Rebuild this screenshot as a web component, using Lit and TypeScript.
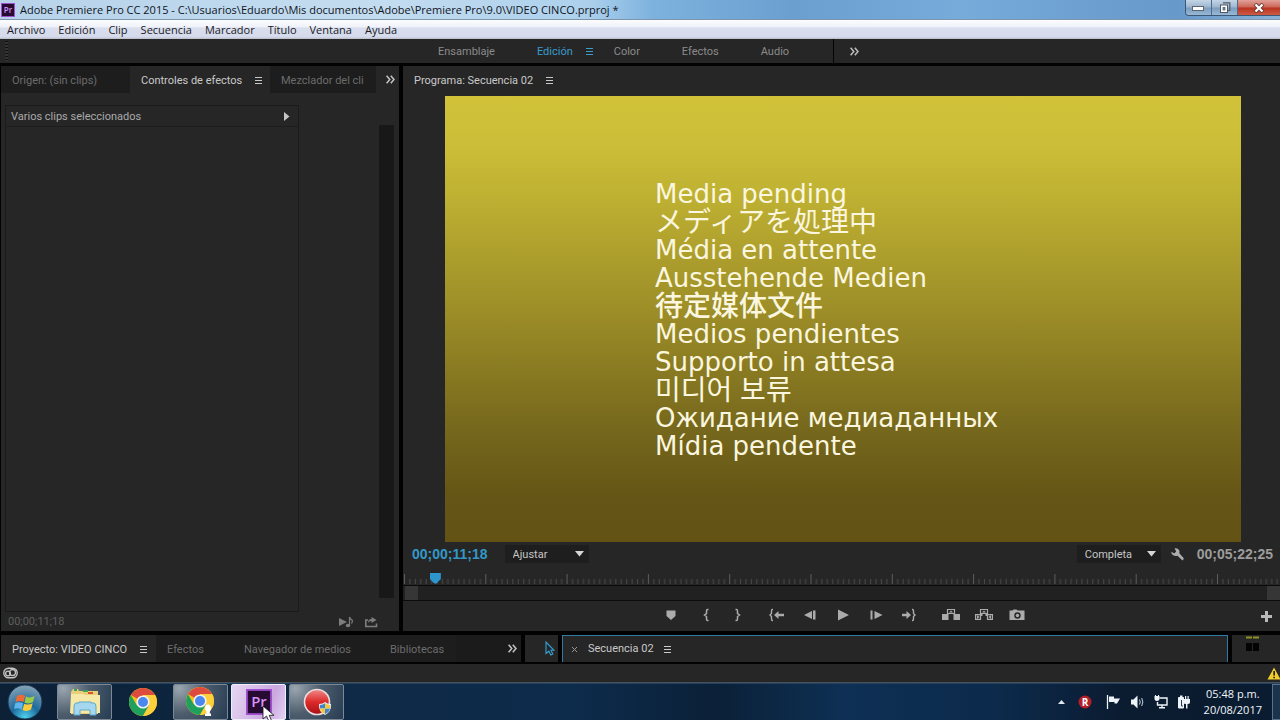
import { LitElement, html, svg, css } from "lit";
import { customElement } from "lit/decorators.js";

const chevrons = html`<svg width="9" height="9" viewBox="0 0 9 9"><path d="M0.6 0.8 3.8 4.5 0.6 8.2M4.8 0.8 8 4.5 4.8 8.2" fill="none" stroke="currentColor" stroke-width="1.5"/></svg>`;
const burger = html`<svg width="7" height="7" viewBox="0 0 7 7"><path d="M0 .5H7M0 3.5H7M0 6.5H7" stroke="currentColor"/></svg>`;
const down = html`<svg class="down" width="9" height="6" viewBox="0 0 9 6"><path d="M0 0H9L4.5 5.5Z" fill="#d6d6d6"/></svg>`;

const icons = {
  marker: svg`<path d="M4.500 3.500H13.500V9L9 13 4.500 9Z"/>`,
  markIn: svg`<path d="M10.500 2.500H9.500Q8.500 2.500 8.500 4V6.500L6.500 8 8.500 9.500V12Q8.500 13.500 9.500 13.500H10.500" fill="none" stroke="currentColor" stroke-width="1.500"/>`,
  markOut: svg`<path d="M7.500 2.500H8.500Q9.500 2.500 9.500 4V6.500L11.500 8 9.500 9.500V12Q9.500 13.500 8.500 13.500H7.500" fill="none" stroke="currentColor" stroke-width="1.500"/>`,
  goIn: svg`<path d="M5 2.500H4.500Q3.500 2.500 3.500 4V6.500L2 8 3.500 9.500V12Q3.500 13.500 4.500 13.500H5" fill="none" stroke="currentColor" stroke-width="1.400"/><path d="M6 8 10.500 4V6.700H16V9.300H10.500V12Z"/>`,
  goOut: svg`<path d="M12 2.500H12.500Q13.500 2.500 13.500 4V6.500L15 8 13.500 9.500V12Q13.500 13.500 12.500 13.500H12" fill="none" stroke="currentColor" stroke-width="1.400"/><path d="M11 8 6.500 4V6.700H2V9.300H6.500V12Z"/>`,
  back: svg`<path d="M3 8 11 4V12ZM12 3.500H14.500V12.500H12Z"/>`,
  play: svg`<path d="M4 2.500 15 8 4 13.500Z"/>`,
  forward: svg`<path d="M15.500 8 7.500 4V12ZM3.500 3.500H5.500V12.500H3.500Z"/>`,
  lift: svg`<path d="M0 7H6.500V13H0ZM11.500 7H18V13H11.500Z"/><path d="M5.500 8V2.500H12.500V8M6 6.500H12" fill="none" stroke="currentColor" stroke-width="1.200"/><path d="M9 3.500 11 5.500H7Z"/>`,
  extract: svg`<path d="M.6 7.600H5.500V12.400H.6ZM12.500 7.600H17.400V12.400H12.500ZM5.500 8V2.500H12.500V8M6 6.500H12" fill="none" stroke="currentColor" stroke-width="1.200"/><path d="M2 8 4.500 10 2 12ZM16 8 13.500 10 16 12ZM9 3.500 11 5.500H7ZM5 7H7.500V9H5ZM10.500 7H13V9H10.500Z"/>`,
  camera: svg`<path fill-rule="evenodd" d="M1.500 3.500H4.500L5.500 2.500H8.500L9.500 3.500H16.500V13H1.500ZM9.500 5.300A3.200 3.200 0 1 0 9.500 11.700A3.200 3.200 0 1 0 9.500 5.300Z"/><circle cx="9.500" cy="8.500" r="1.700"/>`,
};

const transport: { id: keyof typeof icons; label: string; cls: string }[] = [
  { id: "marker", label: "Añadir marcador", cls: "near" },
  { id: "markIn", label: "Marcar entrada", cls: "slim" },
  { id: "markOut", label: "Marcar salida", cls: "slim far" },
  { id: "goIn", label: "Ir a entrada", cls: "" },
  { id: "back", label: "Retroceder un fotograma", cls: "" },
  { id: "play", label: "Reproducir", cls: "" },
  { id: "forward", label: "Avanzar un fotograma", cls: "" },
  { id: "goOut", label: "Ir a salida", cls: "far" },
  { id: "lift", label: "Levantar", cls: "" },
  { id: "extract", label: "Extraer", cls: "" },
  { id: "camera", label: "Exportar fotograma", cls: "" },
];

const pending: { text: string; lang: string; cls: string }[] = [
  { text: "Media pending", lang: "en", cls: "" },
  { text: "メディアを処理中", lang: "ja", cls: "cjk ja" },
  { text: "Média en attente", lang: "fr", cls: "" },
  { text: "Ausstehende Medien", lang: "de", cls: "" },
  { text: "待定媒体文件", lang: "zh", cls: "cjk zh" },
  { text: "Medios pendientes", lang: "es", cls: "" },
  { text: "Supporto in attesa", lang: "it", cls: "" },
  { text: "미디어 보류", lang: "ko", cls: "cjk ko" },
  { text: "Ожидание медиаданных", lang: "ru", cls: "" },
  { text: "Mídia pendente", lang: "pt", cls: "" },
];

const chrome = svg`
  <circle cx="14" cy="14" r="14" fill="#fbc116"/>
  <path d="M14 14 1.880 7A14 14 0 0 1 26.120 7H14Z" fill="#dd4b3e"/>
  <path d="M1.880 7A14 14 0 0 0 14 28L20.060 17.500 14 14 7.940 17.500Z" fill="#1fa15d"/>
  <path d="M14 7H26.120A14 14 0 0 1 14 28L20.060 17.500Z" fill="#fdd03b"/>
  <circle cx="14" cy="14" r="6.600" fill="#f2f2f2"/><circle cx="14" cy="14" r="5" fill="#4a87ee"/>`;

const shield = svg`
  <path d="M0 2Q4 2 6 0 8 2 12 2 12.500 10 6 13-.500 10 0 2Z" fill="#e9eef2"/>
  <path d="M1 3Q4 3 6 1.300V6.500H1ZM6 6.500H11Q10.500 10 6 12Z" fill="#3f86cf"/>
  <path d="M6 1.300Q8 3 11 3V6.500H6ZM1 6.500H6V12Q1.500 10 1 6.500Z" fill="#f3c93a"/>`;

@customElement("app-root")
export class AppRoot extends LitElement {
  static styles = css`
    :host {
      display: flex;
      flex-direction: column;
      height: 100vh;
      min-height: 480px;
      overflow: hidden;
      background: #020202;
      color: #bdbdbd;
      font: 11px/16px Roboto, "Noto Sans CJK JP", sans-serif;
    }
    * { box-sizing: border-box; }
    button, select, input { font: inherit; color: inherit; margin: 0; padding: 0; border: 0; background: none; }
    button { display: flex; align-items: center; justify-content: center; flex: none; white-space: nowrap; }
    svg { flex: none; display: block; }
    h1, p { margin: 0; font: inherit; }

    .titlebar {
      display: flex; align-items: flex-start; height: 20px; padding-left: 1px; flex: none;
      color: #10151c; font: 11px/20px "Open Sans", sans-serif;
      background: linear-gradient(90deg, #b7d3ea 0, #c3dcf0 30%, #acd0ec 46%, #7db2de 51%, #6b9fd0 62%, #76abda 75%, #6799ca 92%, #8ab2d8 100%);
      border-bottom: 1px solid #7d95ad;
    }
    .titlebar h1 { flex: 1; white-space: nowrap; overflow: hidden; }
    .app-icon { margin: 3px 5px 0 0; }
    .win { display: flex; height: 16px; border: 1px solid #3d5874; border-top: 0; border-right: 0; border-radius: 0 0 0 4px; overflow: hidden; }
    .win button { width: 26px; height: 15px; background: linear-gradient(#c4d5e6, #9db6cf 48%, #7c9cbd 52%, #98b8d6); border-right: 1px solid #4c6a89; }
    .win .close { width: 42px; border: 0; background: linear-gradient(#e0a299, #cc6556 48%, #b8331f 52%, #cf5a45); }

    .menubar {
      display: flex; gap: 13px; height: 19px; padding-left: 7px; flex: none;
      color: #1b1b24; font: 11px/19px "Open Sans", sans-serif;
      background: linear-gradient(#fbfcfe 0, #eff2f9 35%, #d9dfee 42%, #d5dbec 88%, #b9bdc8 100%);
    }

    .workspaces { display: flex; align-items: center; flex: none; height: 24px; background: #262626; color: #8b8b8b; margin-bottom: 3px; }
    .grip { width: 3px; height: 20px; margin-left: 5px; background: repeating-linear-gradient(#111 0 1px, #333 1px 3px); }
    .spaces { display: flex; align-items: center; align-self: stretch; gap: 42px; padding: 1px 44px 0 430px; border-right: 1px solid #050505; }
    .spaces .on { color: #3a9ccb; gap: 13px; margin-right: -21px; }
    .more { color: #bdbdbd; }
    .workspaces .more { margin-left: 16px; }

    .main { display: flex; flex: 1; min-height: 0; gap: 4px; padding-left: 1px; }
    .panel { background: #262626; display: flex; flex-direction: column; min-width: 0; }
    .effects { width: 398px; flex: none; }
    .program { flex: 1; }
    .tabs { display: flex; height: 27px; flex: none; background: #262626; }
    .tabs button { color: #6c6c6c; background: #1d1d1d; justify-content: flex-start; padding: 2px 12px 0 11px; gap: 13px; }
    .tabs .on { color: #c9c9c9; background: #262626; }
    .tabs .more { margin-left: auto; background: none; padding: 0 4px; color: #c4c4c4; }
    .tabs .t1 { width: 129px; }
    .tabs .t2 { width: 140px; }
    .tabs .t3 { width: 106px; }

    .fx { flex: 1; display: flex; justify-content: space-between; min-height: 0; padding: 12px 5px 0 4px; }
    .fxlist { width: 294px; border: 1px solid #1b1b1b; }
    .fxhead { display: flex; justify-content: space-between; align-items: center; height: 21px; padding: 1px 8px 0 5px; border-bottom: 1px solid #1d1d1d; color: #aaa; }
    .fxbar { width: 15px; background: #181818; margin: 20px 0 14px; }
    .fxfoot { display: flex; align-items: center; height: 19px; flex: none; padding: 1px 20px 0 7px; color: #5f5f5f; }
    .fxfoot time { flex: 1; }
    .fxfoot button { color: #7d7d7d; margin-left: 10px; }

    .program .tabs button { background: none; }
    .screen {
      flex: 1; min-height: 0; margin: 3px 39px 0 42px; display: flex; flex-direction: column; justify-content: center; align-items: flex-start;
      padding: 2px 0 0 210px; color: #fbf6df; white-space: nowrap; overflow: hidden;
      font: 26px/28px "DejaVu Sans", sans-serif;
      background: linear-gradient(#d1c23a 0, #cbbd37 12%, #bfb132 22%, #9a8b27 50%, #75671c 75%, #655516 90%, #625214 100%);
    }
    .cjk { font-size: 28px; line-height: 24px; padding-bottom: 4px; }
    .ja { font-family: "Noto Sans CJK JP", sans-serif; }
    .zh { font-family: "Noto Sans CJK SC", sans-serif; font-weight: 500; }
    .ko { font-family: "Noto Sans CJK KR", sans-serif; }

    .readout { display: flex; align-items: center; height: 24px; flex: none; padding: 0 7px 0 9px; }
    .tc { font: bold 14px/20px "Liberation Sans", sans-serif; color: #9c9c9c; }
    .tc.now { color: #3398c8; margin-right: 17px; }
    .drop { display: grid; align-items: center; background: #1e1e1e; height: 18px; color: #c6c6c6; }
    .drop select { grid-area: 1 / 1; appearance: none; width: 84px; height: 18px; padding: 1px 8px 0; outline: 0; }
    .drop .down { grid-area: 1 / 1; justify-self: end; margin-right: 5px; pointer-events: none; }
    .fill { flex: 1; }
    .wrench { margin: 0 13px 0 10px; color: #adadad; }

    .ruler { display: grid; height: 20px; flex: none; border-bottom: 1px solid #0a0a0a; }
    .ruler svg { grid-area: 1 / 1; align-self: end; }
    .ruler input { grid-area: 1 / 1; align-self: end; appearance: none; width: 100%; height: 14px; }
    .ruler input::-webkit-slider-thumb { appearance: none; width: 11px; height: 11px; background: #2e96cc; clip-path: polygon(0 0, 100% 0, 100% 60%, 60% 100%, 40% 100%, 0 60%); }
    .zoombar { display: flex; justify-content: space-between; height: 15px; flex: none; background: #212121; border-bottom: 1px solid #0c0c0c; padding-left: 2px; }
    .zoombar i { width: 13px; background: #363636; }
    .transport { display: grid; grid-template-columns: 1fr auto 1fr; align-items: center; height: 30px; flex: none; color: #ababab; padding-left: 5px; }
    .keys { display: flex; gap: 9px; padding-bottom: 2px; }
    .keys button { width: 24px; height: 20px; }
    .keys .slim { width: 21px; }
    .keys .near { margin-right: 4px; }
    .keys .far { margin-right: 9px; }
    .add { justify-self: end; width: 28px; }

    .lower { display: flex; height: 27px; flex: none; gap: 4px; margin: 4px 0 2px; padding-left: 1px; }
    .lower .tabs { background: #1b1b1b; height: 27px; }
    .project { width: 520px; }
    .project .p1 { width: 155px; }
    .project .p2 { width: 77px; }
    .project .p3 { width: 146px; }
    .tools { width: 33px; background: #262626; display: flex; align-items: center; justify-content: flex-end; padding-right: 3px; }
    .timeline { flex: 1; display: flex; align-items: center; background: #262626; border: 1px solid #2f7ba3; border-bottom: 0; color: #c9c9c9; padding-left: 8px; gap: 10px; }
    .meters { width: 48px; background: #262626; padding: 1px 0 0 14px; }

    .status { display: flex; justify-content: space-between; align-items: center; height: 19px; flex: none; background: #262626; border-bottom: 1px solid #4a5058; padding-left: 3px; }

    .taskbar {
      display: flex; height: 37px; flex: none; padding-left: 5px; color: #f1f5f9;
      background: linear-gradient(90deg, #0c2036 0, #0f2a47 28%, #0d2b4b 45%, #0b2038 56%, #0e3054 66%, #0c2a4b 78%, #0b1b30 88%, #0a1c31 100%);
      border-top: 1px solid #22425f;
    }
    .orb { width: 40px; margin-right: 12px; }
    .task { position: relative; width: 55px; margin-right: 3px; height: 36px; border: 1px solid transparent; border-radius: 2px; }
    .task.open { border-color: #7c8894; background: radial-gradient(circle at 10% 10%, #9aa5af, #4e5d6d 45%, #263c53); }
    .task.now { border-color: #f3ecfa; background: linear-gradient(110deg, #e7d7f2, #c9a8e0 70%, #e6d2f2); }
    .cursor { position: absolute; left: 30px; top: 20px; }
    .tray { margin-left: auto; display: flex; align-items: center; gap: 9px; }
    .clock { text-align: center; font: 11px/16px "Open Sans", sans-serif; margin: 2px 1px 2px 4px; }
    .peek { width: 8px; align-self: stretch; border: 1px solid #5a7088; border-right: 0; background: #1b334c; }
  `;

  private ruler() {
    return html`<svg width="100%" height="11" aria-hidden="true">
      <defs><pattern id="ticks" x="1" width="81.3" height="11" patternUnits="userSpaceOnUse">
        ${Array.from({ length: 15 }, (_, i) => svg`<rect x=${i * 5.42} y=${i ? 5 : 0} width="1" height=${i ? 5 : 10} fill=${i ? "#4a4a4a" : "#5c5c5c"}></rect>`)}
      </pattern></defs>
      <rect width="100%" height="11" fill="url(#ticks)"/></svg>`;
  }

  private premiere(size: number) {
    return html`<svg class=${size < 20 ? "app-icon" : ""} width=${size} height=${size} viewBox="0 0 28 28">
      <rect x="1" y="1" width="26" height="26" fill="#270b33" stroke="#a04fd0" stroke-width="2"/>
      <text x="14" y="19" text-anchor="middle" font-family="Open Sans" font-weight="600" font-size="16" fill="#d793f5">Pr</text></svg>`;
  }

  render() {
    return html`
      <header class="titlebar">
        ${this.premiere(14)}
        <h1>Adobe Premiere Pro CC 2015 - C:\\Usuarios\\Eduardo\\Mis documentos\\Adobe\\Premiere Pro\\9.0\\VIDEO CINCO.prproj *</h1>
        <div class="win">
          <button aria-label="Minimizar"><svg width="13" height="6"><rect x=".5" y="1.5" width="11" height="4" fill="#fff" stroke="#5c6672"/></svg></button>
          <button aria-label="Restaurar"><svg width="12" height="12" viewBox="0 0 12 12"><path d="M4 .8H10.800V8.500H9" fill="none" stroke="#4f5964" stroke-width="1.200"/><rect x="1.500" y="3" width="7" height="7.500" fill="#fff" stroke="#4f5964"/><rect x="4" y="5.500" width="2" height="2.500" fill="#7390ae" stroke="#4f5964" stroke-width=".7"/></svg></button>
          <button class="close" aria-label="Cerrar"><svg width="12" height="10" viewBox="0 0 12 10"><path d="M2 1 10 9M10 1 2 9" stroke="#6b3a36" stroke-width="4"/><path d="M2.500 1.500 9.500 8.500M9.500 1.500 2.500 8.500" stroke="#fff" stroke-width="2.300"/></svg></button>
        </div>
      </header>
      <nav class="menubar">
        ${["Archivo", "Edición", "Clip", "Secuencia", "Marcador", "Título", "Ventana", "Ayuda"].map((m) => html`<button>${m}</button>`)}
      </nav>
      <nav class="workspaces">
        <span class="grip"></span>
        <div class="spaces">
          <button>Ensamblaje</button><button class="on">Edición ${burger}</button><button>Color</button><button>Efectos</button><button>Audio</button>
        </div>
        <button class="more" aria-label="Más espacios">${chevrons}</button>
      </nav>

      <main class="main">
        <section class="panel effects">
          <div class="tabs">
            <button class="t1">Origen: (sin clips)</button>
            <button class="t2 on">Controles de efectos ${burger}</button>
            <button class="t3">Mezclador del cli</button>
            <button class="more" aria-label="Más paneles">${chevrons}</button>
          </div>
          <div class="fx">
            <div class="fxlist">
              <div class="fxhead">Varios clips seleccionados <svg width="6" height="9"><path d="M0 0 5.500 4.500 0 9Z" fill="#c4c4c4"/></svg></div>
            </div>
            <div class="fxbar"></div>
          </div>
          <div class="fxfoot">
            <time>00;00;11;18</time>
            <button aria-label="Reproducir audio"><svg width="15" height="12" viewBox="0 0 15 12" fill="currentColor"><path d="M0 2 8 6 0 10Z"/><ellipse cx="9" cy="9.500" rx="2.200" ry="1.700"/><path d="M10.500 9.500V1Q11 3 13 4 14 5 12.500 7.500" fill="none" stroke="currentColor" stroke-width="1.200"/></svg></button>
            <button aria-label="Exportar"><svg width="15" height="12" viewBox="0 0 15 12" fill="currentColor"><path d="M4 4H1.800V10.500H12.500V7.500" fill="none" stroke="currentColor" stroke-width="1.600"/><path d="M4 7Q4 3 7.500 3V1L12.500 4 7.500 7V5Q5 5 4 7Z"/></svg></button>
          </div>
        </section>

        <section class="panel program">
          <div class="tabs"><button class="on">Programa: Secuencia 02 ${burger}</button></div>
          <div class="screen">${pending.map((l) => html`<p class=${l.cls} lang=${l.lang}>${l.text}</p>`)}</div>
          <div class="readout">
            <time class="tc now">00;00;11;18</time>
            <div class="drop"><select aria-label="Nivel de zoom"><option>Ajustar</option></select>${down}</div>
            <span class="fill"></span>
            <div class="drop"><select aria-label="Resolución de reproducción"><option>Completa</option></select>${down}</div>
            <button class="wrench" aria-label="Ajustes"><svg width="13" height="13" viewBox="0 0 13 13"><path d="M3.500.3Q7-.3 8.300 2.500 8.700 4 8.300 5.200L12.600 10Q13 11.500 11.500 12.600L6.500 7.800Q3 8.600 1 6.300.200 5 .5 3.800L3.200 5.500 5.200 3.600Z" fill="currentColor"/></svg></button>
            <time class="tc">00;05;22;25</time>
          </div>
          <div class="ruler">${this.ruler()}<input type="range" aria-label="Posición" min="0" max="1000" value="31" /></div>
          <div class="zoombar"><i></i><i></i></div>
          <div class="transport">
            <span></span>
            <div class="keys">
              ${transport.map((b) => html`<button class=${b.cls} aria-label=${b.label}><svg width="18" height="16" viewBox="0 0 18 16" fill="currentColor">${icons[b.id]}</svg></button>`)}
            </div>
            <button class="add" aria-label="Editor de botones"><svg width="11" height="11"><path d="M4 0H7V4H11V7H7V11H4V7H0V4H4Z" fill="#b8b8b8"/></svg></button>
          </div>
        </section>
      </main>

      <section class="lower">
        <div class="tabs project">
          <button class="p1 on">Proyecto: VIDEO CINCO ${burger}</button><button class="p2">Efectos</button><button class="p3">Navegador de medios</button><button>Bibliotecas</button>
          <button class="more" aria-label="Más paneles">${chevrons}</button>
        </div>
        <div class="tools"><button aria-label="Selección"><svg width="10" height="15" viewBox="0 0 10 15"><path d="M1 1V12.500L3.800 10.200 5.800 14 7.800 13 6 9.300H9Z" fill="#1c2b33" stroke="#3a9ccb" stroke-width="1.100"/></svg></button></div>
        <div class="timeline">
          <button aria-label="Cerrar secuencia"><svg width="7" height="7"><path d="M1 1 6 6M6 1 1 6" stroke="#9a9a9a"/></svg></button>
          <span>Secuencia 02</span><button aria-label="Menú del panel">${burger}</button>
        </div>
        <div class="meters"><svg width="13" height="16"><path d="M0 1.500H6M7 1.500H13" stroke="#8f9122" stroke-width="2"/><path d="M0 11H6M7 11H13" stroke="#040404" stroke-width="8"/></svg></div>
      </section>

      <footer class="status">
        <svg width="15" height="12" viewBox="0 0 15 12"><rect x=".8" y="1.200" width="13.400" height="9.600" rx="4.800" fill="none" stroke="#c4c4c4" stroke-width="1.400"/><circle cx="5" cy="6.500" r="2.400" fill="none" stroke="#c4c4c4" stroke-width="1.300"/><circle cx="9.500" cy="5.500" r="3" fill="none" stroke="#c4c4c4" stroke-width="1.300"/></svg>
        <svg width="13" height="13" viewBox="0 0 13 13"><path d="M7 .5 13.500 12.500H.5Z" fill="#f2cf2e"/><path d="M6.300 4H8V8.500H6.300ZM6.300 9.700H8V11.200H6.300Z" fill="#2c2608"/></svg>
      </footer>

      <nav class="taskbar">
        <button class="orb" aria-label="Inicio"><svg width="36" height="36" viewBox="0 0 36 36">
          <defs><radialGradient id="orb" cx=".5" cy=".95" r=".9"><stop offset="0" stop-color="#4fd0ee"/><stop offset=".45" stop-color="#1d6a9d"/><stop offset="1" stop-color="#7f9fb4"/></radialGradient></defs>
          <circle cx="18" cy="18" r="17" fill="url(#orb)" stroke="#16344e"/>
          <path d="M10 12Q14 9.500 18 12L16.500 18Q13 16 8.500 18Z" fill="#ee6a35"/><path d="M19 12.500Q23 14.500 27.500 12L26 18Q22 20.500 17.500 18.500Z" fill="#9ccb45"/>
          <path d="M8.200 19.200Q12 17.300 16.200 19.300L14.600 25.500Q11 23.500 7 25Z" fill="#5eb5ea"/><path d="M17.200 19.700Q21 21.700 25.700 19.300L24 25.500Q20 28 15.600 26Z" fill="#fbcb3a"/></svg></button>
        <button class="task open" aria-label="Explorador"><svg width="32" height="30" viewBox="0 0 32 30">
          <path d="M2 5 4 2H9L10 4H29V27H2Z" fill="#e9cf79"/><path d="M5 2H8V4H5ZM14 3H19V5H14Z" fill="#3da551"/><path d="M19 5H24V7H19Z" fill="#d6532b"/><path d="M2 7H14L16 8H31V26H1Z" fill="#f6e8a6"/>
          <path d="M5 20Q5 16 7 16H10V15H22V16H25Q27 16 27 20V28H21V23H11V28H5Z" fill="#a5d8ee" stroke="#5fa9cd"/></svg></button>
        <button class="task" aria-label="Chrome"><svg width="28" height="28" viewBox="0 0 28 28">${chrome}</svg></button>
        <button class="task open" aria-label="Chrome, perfil"><svg width="30" height="30" viewBox="0 0 30 30">${chrome}<path d="M19 21Q19 17.500 22 17.500 25 17.500 25 21 25 23.500 23.800 24.500V26.500H25V29H19V26.500H20.500V24.500Q19 23.500 19 21Z" fill="#fff"/></svg></button>
        <button class="task now" aria-label="Premiere Pro">${this.premiere(26)}
          <svg class="cursor" width="14" height="16" viewBox="0 0 14 16"><path d="M1 1V14L4.500 11 7 16.500 9.500 15.500 7.200 10.300H12Z" fill="#fff" stroke="#111" stroke-width=".8"/></svg></button>
        <button class="task open" aria-label="Grabadora"><svg width="30" height="30" viewBox="0 0 30 30">
          <defs><linearGradient id="rec" x2="0" y2="1"><stop offset="0" stop-color="#f08a86"/><stop offset=".5" stop-color="#dc2a2a"/><stop offset="1" stop-color="#a80f14"/></linearGradient></defs>
          <circle cx="15" cy="15" r="12.500" fill="url(#rec)" stroke="#e6dede" stroke-width="1.600"/><g transform="translate(17 15)">${shield}</g></svg></button>
        <div class="tray">
          <svg width="7" height="4"><path d="M0 4 3.500 0 7 4Z" fill="#dfe7ef"/></svg>
          <svg width="23" height="14" viewBox="0 0 23 14"><circle cx="11" cy="7" r="6.500" fill="#b3202a"/><text x="11" y="10.500" text-anchor="middle" font-family="Open Sans" font-weight="bold" font-size="10" fill="#fff">R</text></svg>
          <svg width="15" height="14" viewBox="0 0 15 14"><path d="M1.500 0V14" stroke="#eef3f7" stroke-width="1.300"/><path d="M3 1.500H8V3.500H14L12.500 6 11 8.500H8.500V7H3Z" fill="#eef3f7"/></svg>
          <svg width="15" height="14" viewBox="0 0 15 14"><path d="M1 4.500H3.500L7.500.5V13.500L3.500 9.500H1Z" fill="#eef3f7"/><path d="M9.500 4.500Q11 7 9.500 9.500M11.700 3Q14 7 11.700 11" fill="none" stroke="#c7d3de"/></svg>
          <svg width="14" height="14" viewBox="0 0 14 14"><path d="M5.500 3H13V10H3.500V7M8 10V12.500M5 12.800H11" fill="none" stroke="#eef3f7" stroke-width="1.400"/><path d="M.5 1H5.500V4Q5.500 6 3 6 .5 6 .5 4ZM1 0H2V2H1ZM4 0H5V2H4Z" fill="#eef3f7"/></svg>
          <svg width="14" height="14" viewBox="0 0 14 14"><path d="M1.500 2.500H6.500V13H1.500Z" fill="#eef3f7" stroke="#eef3f7"/><path d="M3 .5H5.500V2H3ZM6.500 4H13V7.500Q13 9 10.500 9V13.500H9V9Q6.500 9 6.500 7.500ZM8 1H9.200V4H8ZM10.500 1H11.700V4H10.500Z" fill="#eef3f7"/><path d="M4.500 5V11H6" stroke="#24405c" fill="none"/></svg>
          <time class="clock">05:48 p.m.<br />20/08/2017</time>
          <span class="peek"></span>
        </div>
      </nav>
    `;
  }
}
